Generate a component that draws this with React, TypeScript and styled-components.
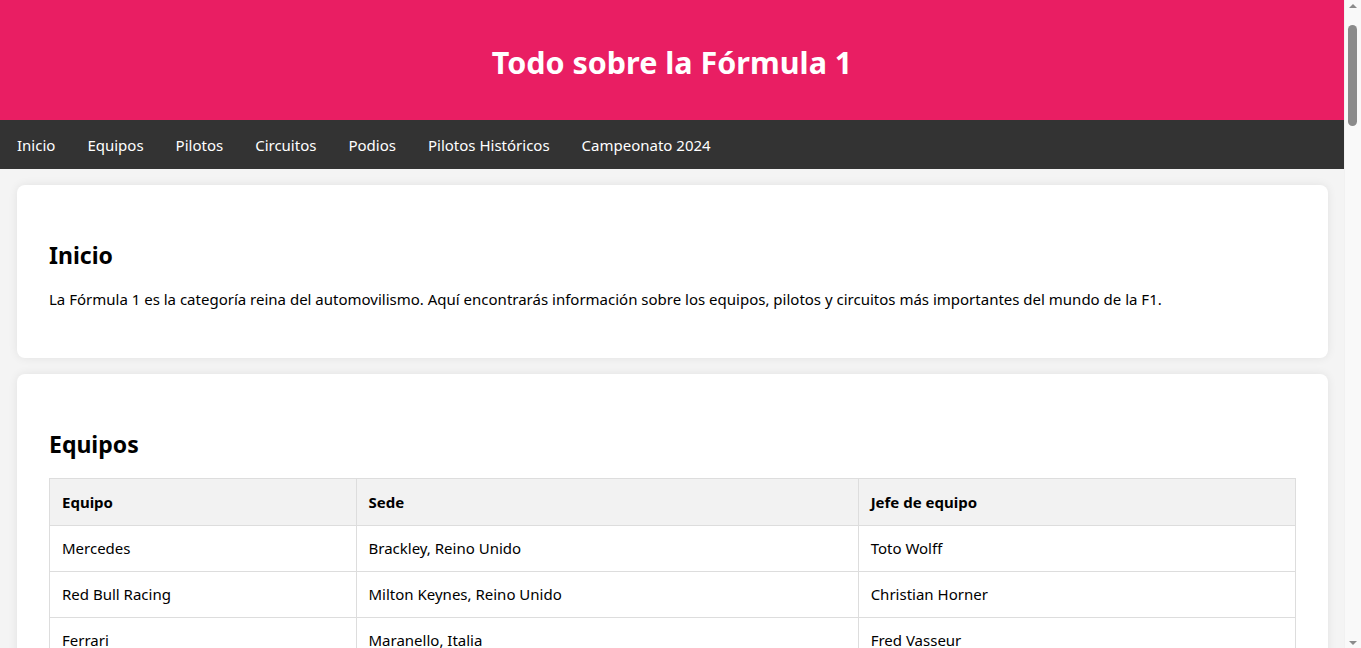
import React from "react";
import styled, { createGlobalStyle } from "styled-components";

const GlobalStyle = createGlobalStyle`
  html, body {
    margin: 0;
    padding: 0;
  }
  body {
    background: #f4f4f4;
    font-family: "Segoe UI", "Noto Sans", sans-serif;
    color: #000;
    margin-right: 17px;
  }
`;

const ScrollTrack = styled.div`
  position: fixed;
  top: 0;
  right: 0;
  width: 17px;
  height: 100vh;
  background: #f9f9f9;
  box-shadow: inset 1px 0 0 #f1f1f1;
  display: flex;
  flex-direction: column;
  align-items: center;
  justify-content: space-between;
  z-index: 10;
`;

const ScrollArrow = styled.div<{ $down?: boolean }>`
  height: 17px;
  width: 17px;
  display: flex;
  align-items: center;
  justify-content: center;
  &::before {
    content: "";
    width: 0;
    height: 0;
    border-left: 4px solid transparent;
    border-right: 4px solid transparent;
    ${(p) =>
      p.$down
        ? "border-top: 4px solid #8b8b8b; margin-top: 7px;"
        : "border-bottom: 4px solid #8b8b8b; margin-top: -6px;"}
  }
`;

const ScrollBody = styled.div`
  flex: 1;
  width: 100%;
  display: flex;
  justify-content: center;
  padding-top: 8px;
`;

const ScrollThumb = styled.div`
  width: 9px;
  height: 101px;
  border-radius: 5px;
  background: #8b8b8b;
`;

const Header = styled.header`
  background: #e91e63;
  color: #fff;
  height: 120px;
  display: flex;
  align-items: center;
  justify-content: center;
`;

const Title = styled.h1`
  margin: 0;
  font-size: 30.5px;
  font-weight: 700;
  line-height: 40px;
  padding-top: 4px;
`;

const Nav = styled.nav`
  background: #333;
  display: flex;
  padding-left: 1px;
`;

const NavLink = styled.a`
  color: #fff;
  text-decoration: none;
  font-size: 15px;
  line-height: 21px;
  padding: 15px 16px 13px;
`;

const Main = styled.main`
  padding: 16px 16px 16px 17px;
  display: flex;
  flex-direction: column;
  gap: 16px;
`;

const Card = styled.section`
  background: #fff;
  border-radius: 8px;
  box-shadow: 0 0 10px rgba(0, 0, 0, 0.08);
  padding: 32px;
`;

const Heading = styled.h2`
  font-size: 23px;
  font-weight: 700;
  line-height: 32px;
  margin: 22px 0 18px;
`;

const Text = styled.p`
  font-size: 15px;
  line-height: 21px;
  margin: 0 0 16px;
`;

const Table = styled.table`
  width: 100%;
  border-collapse: collapse;
  font-size: 15px;
`;

const Th = styled.th<{ $w: string }>`
  width: ${(p) => p.$w};
  background: #f2f2f2;
  border: 1px solid #ddd;
  text-align: left;
  padding: 12px;
  font-weight: 700;
  line-height: 22px;
`;

const Td = styled.td`
  border: 1px solid #ddd;
  padding: 12px;
  line-height: 21px;
`;

type Section = {
  title: string;
  text?: string;
  cols?: { label: string; w: string }[];
  rows?: string[][];
};

const navItems = [
  "Inicio",
  "Equipos",
  "Pilotos",
  "Circuitos",
  "Podios",
  "Pilotos Históricos",
  "Campeonato 2024",
];

const sections: Section[] = [
  {
    title: "Inicio",
    text: "La Fórmula 1 es la categoría reina del automovilismo. Aquí encontrarás información sobre los equipos, pilotos y circuitos más importantes del mundo de la F1.",
  },
  {
    title: "Equipos",
    cols: [
      { label: "Equipo", w: "24.6%" },
      { label: "Sede", w: "40.3%" },
      { label: "Jefe de equipo", w: "35.1%" },
    ],
    rows: [
      ["Mercedes", "Brackley, Reino Unido", "Toto Wolff"],
      ["Red Bull Racing", "Milton Keynes, Reino Unido", "Christian Horner"],
      ["Ferrari", "Maranello, Italia", "Fred Vasseur"],
      ["McLaren", "Woking, Reino Unido", "Andrea Stella"],
      ["Aston Martin", "Silverstone, Reino Unido", "Mike Krack"],
      ["Alpine", "Enstone, Reino Unido", "Bruno Famin"],
      ["Williams", "Grove, Reino Unido", "James Vowles"],
      ["RB", "Faenza, Italia", "Laurent Mekies"],
      ["Sauber", "Hinwil, Suiza", "Alessandro Alunni Bravi"],
      ["Haas", "Kannapolis, Estados Unidos", "Ayao Komatsu"],
    ],
  },
  {
    title: "Pilotos",
    cols: [
      { label: "Piloto", w: "33%" },
      { label: "Equipo", w: "33%" },
      { label: "Nacionalidad", w: "34%" },
    ],
    rows: [
      ["Max Verstappen", "Red Bull Racing", "Países Bajos"],
      ["Sergio Pérez", "Red Bull Racing", "México"],
      ["Lewis Hamilton", "Mercedes", "Reino Unido"],
      ["George Russell", "Mercedes", "Reino Unido"],
      ["Charles Leclerc", "Ferrari", "Mónaco"],
      ["Carlos Sainz", "Ferrari", "España"],
      ["Lando Norris", "McLaren", "Reino Unido"],
      ["Oscar Piastri", "McLaren", "Australia"],
      ["Fernando Alonso", "Aston Martin", "España"],
      ["Lance Stroll", "Aston Martin", "Canadá"],
    ],
  },
  {
    title: "Circuitos",
    cols: [
      { label: "Circuito", w: "40%" },
      { label: "País", w: "30%" },
      { label: "Longitud", w: "30%" },
    ],
    rows: [
      ["Circuito de Mónaco", "Mónaco", "3,337 km"],
      ["Silverstone", "Reino Unido", "5,891 km"],
      ["Monza", "Italia", "5,793 km"],
      ["Spa-Francorchamps", "Bélgica", "7,004 km"],
      ["Suzuka", "Japón", "5,807 km"],
      ["Interlagos", "Brasil", "4,309 km"],
    ],
  },
  {
    title: "Podios",
    cols: [
      { label: "Piloto", w: "50%" },
      { label: "Podios", w: "50%" },
    ],
    rows: [
      ["Lewis Hamilton", "197"],
      ["Michael Schumacher", "155"],
      ["Sebastian Vettel", "122"],
      ["Max Verstappen", "105"],
      ["Alain Prost", "106"],
    ],
  },
  {
    title: "Pilotos Históricos",
    text: "Ayrton Senna, Michael Schumacher, Juan Manuel Fangio, Alain Prost y Niki Lauda son algunas de las leyendas que marcaron la historia de la Fórmula 1.",
  },
  {
    title: "Campeonato 2024",
    cols: [
      { label: "Posición", w: "20%" },
      { label: "Piloto", w: "50%" },
      { label: "Puntos", w: "30%" },
    ],
    rows: [
      ["1", "Max Verstappen", "437"],
      ["2", "Lando Norris", "374"],
      ["3", "Charles Leclerc", "356"],
      ["4", "Oscar Piastri", "292"],
      ["5", "Carlos Sainz", "290"],
    ],
  },
];

export default function App() {
  return (
    <>
      <GlobalStyle />
      <ScrollTrack aria-hidden>
        <ScrollArrow />
        <ScrollBody>
          <ScrollThumb />
        </ScrollBody>
        <ScrollArrow $down />
      </ScrollTrack>
      <Header>
        <Title>Todo sobre la Fórmula 1</Title>
      </Header>
      <Nav>
        {navItems.map((n) => (
          <NavLink key={n} href={`#${n}`}>
            {n}
          </NavLink>
        ))}
      </Nav>
      <Main>
        {sections.map((s) => (
          <Card key={s.title} id={s.title}>
            <Heading>{s.title}</Heading>
            {s.text && <Text>{s.text}</Text>}
            {s.cols && s.rows && (
              <Table>
                <thead>
                  <tr>
                    {s.cols.map((c) => (
                      <Th key={c.label} $w={c.w}>
                        {c.label}
                      </Th>
                    ))}
                  </tr>
                </thead>
                <tbody>
                  {s.rows.map((r, i) => (
                    <tr key={i}>
                      {r.map((c, j) => (
                        <Td key={j}>{c}</Td>
                      ))}
                    </tr>
                  ))}
                </tbody>
              </Table>
            )}
          </Card>
        ))}
      </Main>
    </>
  );
}
